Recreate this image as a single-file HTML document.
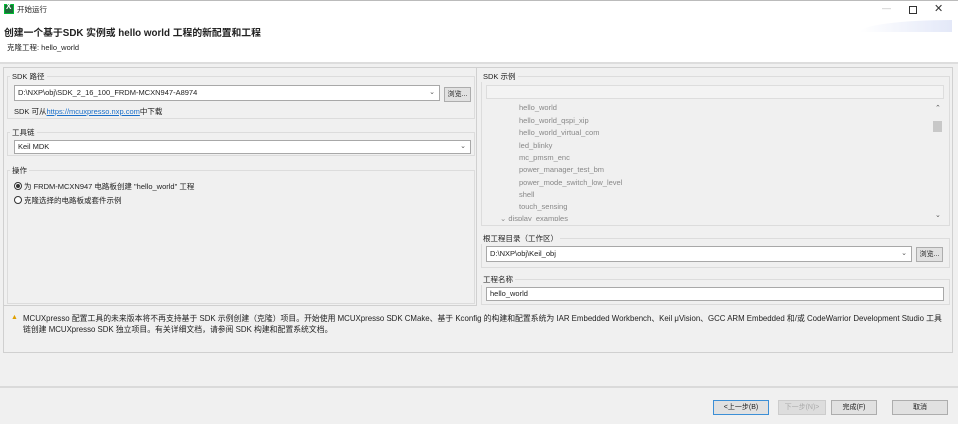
<!DOCTYPE html>
<html><head><meta charset="utf-8"><style>
*{margin:0;padding:0;box-sizing:border-box}
body{width:958px;height:424px;overflow:hidden;background:#f0f0f0;font-family:"Liberation Sans","Noto Sans CJK SC",sans-serif;font-size:8px;color:#222;position:relative}
.a{position:absolute;white-space:nowrap}
.lb{position:absolute;white-space:nowrap;background:#f0f0f0;padding:0 2px;z-index:2;font-size:7.5px}
.box{position:absolute;border:1px solid #dcdcdc}
.in{position:absolute;background:#fff;border:1px solid #a8a8a8;padding-left:3px;line-height:13px;font-size:7.5px}
.btn{position:absolute;background:#e1e1e1;border:1px solid #adadad;text-align:center;font-size:7px;line-height:13px}
.dd{position:absolute;right:4px;top:0;font-size:7px;color:#555}
.li{position:absolute;left:519px;color:#888;font-size:7.5px}
</style></head><body>
<div class="a" style="left:0;top:0;width:958px;height:62px;background:#fff;border-top:1px solid #bbb"></div>
<div class="a" style="left:4px;top:4px;width:10px;height:10px;background:#1e6b3a;border:1px solid #0b3"></div>
<div class="a" style="left:6px;top:2px;color:#fff;font-size:8px;font-weight:bold">X</div>
<div class="a" style="left:17px;top:4px;font-size:7.5px">开始运行</div>
<div class="a" style="left:882px;top:3px;font-size:9px;color:#bbb">—</div>
<div class="a" style="left:909px;top:6px;width:8px;height:8px;border:1px solid #333"></div>
<div class="a" style="left:934px;top:2px;font-size:11px;color:#333">✕</div>
<div class="a" style="left:860px;top:20px;width:92px;height:12px;background:linear-gradient(90deg,#fff,#e3e8f8);border-radius:100% 0 0 0"></div>
<div class="a" style="left:4px;top:25px;font-size:9.8px;font-weight:bold">创建一个基于SDK 实例或 hello world 工程的新配置和工程</div>
<div class="a" style="left:7px;top:42px;font-size:7.5px">克隆工程: hello_world</div>
<div class="a" style="left:0;top:62px;width:958px;height:2px;background:#ddd"></div>

<div class="box" style="left:3px;top:67px;width:950px;height:286px;border-color:#d0d0d0"></div>
<div class="box" style="left:3px;top:67px;width:474px;height:239px;border-color:#d0d0d0"></div>

<div class="lb" style="left:10px;top:71px">SDK 路径</div>
<div class="box" style="left:7px;top:76px;width:468px;height:43px"></div>
<div class="in" style="left:14px;top:85px;width:426px;height:16px">D:\NXP\obj\SDK_2_16_100_FRDM-MCXN947-A8974<span class="dd">⌄</span></div>
<div class="btn" style="left:444px;top:87px;width:27px;height:15px">浏览...</div>
<div class="a" style="left:14px;top:106px;font-size:7.5px">SDK 可从<span style="color:#1a6fc9;text-decoration:underline">https://mcuxpresso.nxp.com</span>中下载</div>

<div class="lb" style="left:10px;top:127px">工具链</div>
<div class="box" style="left:7px;top:132px;width:468px;height:24px"></div>
<div class="in" style="left:14px;top:140px;width:457px;height:14px;line-height:12px">Keil MDK<span class="dd">⌄</span></div>

<div class="lb" style="left:10px;top:165px">操作</div>
<div class="box" style="left:7px;top:170px;width:468px;height:134px"></div>
<div class="a" style="left:14px;top:182px;width:8px;height:8px;border:1px solid #333;border-radius:50%;background:#fff"></div>
<div class="a" style="left:16px;top:184px;width:4px;height:4px;border-radius:50%;background:#333"></div>
<div class="a" style="left:24px;top:181px;font-size:7.5px">为 FRDM-MCXN947 电路板创建 "hello_world" 工程</div>
<div class="a" style="left:14px;top:196px;width:8px;height:8px;border:1px solid #333;border-radius:50%;background:#fff"></div>
<div class="a" style="left:24px;top:195px;font-size:7.5px">克隆选择的电路板或套件示例</div>

<div class="lb" style="left:481px;top:71px">SDK 示例</div>
<div class="box" style="left:481px;top:76px;width:469px;height:150px"></div>
<div class="a" style="left:486px;top:85px;width:458px;height:14px;border:1px solid #ddd;background:#f3f3f3"></div>
<div class="li" style="top:103px">hello_world</div>
<div class="li" style="top:116px">hello_world_qspi_xip</div>
<div class="li" style="top:128px">hello_world_virtual_com</div>
<div class="li" style="top:141px">led_blinky</div>
<div class="li" style="top:153px">mc_pmsm_enc</div>
<div class="li" style="top:165px">power_manager_test_bm</div>
<div class="li" style="top:178px">power_mode_switch_low_level</div>
<div class="li" style="top:190px">shell</div>
<div class="li" style="top:202px">touch_sensing</div>
<div class="li" style="top:214px;left:500px;height:7px;overflow:hidden">⌄ display_examples</div>
<div class="a" style="left:935px;top:104px;font-size:7px;color:#555">⌃</div>
<div class="a" style="left:933px;top:121px;width:9px;height:11px;background:#c8c8c8"></div>
<div class="a" style="left:935px;top:211px;font-size:7px;color:#555">⌄</div>

<div class="lb" style="left:481px;top:233px">根工程目录（工作区）</div>
<div class="box" style="left:481px;top:238px;width:469px;height:30px"></div>
<div class="in" style="left:486px;top:246px;width:426px;height:16px">D:\NXP\obj\Keil_obj<span class="dd">⌄</span></div>
<div class="btn" style="left:916px;top:247px;width:27px;height:15px">浏览...</div>

<div class="lb" style="left:481px;top:274px">工程名称</div>
<div class="box" style="left:481px;top:279px;width:469px;height:26px"></div>
<div class="in" style="left:486px;top:287px;width:458px;height:14px;line-height:12px">hello_world</div>

<div class="a" style="left:11px;top:314px;color:#e0a000;font-size:7px">▲</div>
<div class="a" style="left:23px;top:313px;font-size:7.85px;line-height:11px">MCUXpresso 配置工具的未来版本将不再支持基于 SDK 示例创建（克隆）项目。开始使用 MCUXpresso SDK CMake、基于 Kconfig 的构建和配置系统为 IAR Embedded Workbench、Keil μVision、GCC ARM Embedded 和/或 CodeWarrior Development Studio 工具<br>链创建 MCUXpresso SDK 独立项目。有关详细文档，请参阅 SDK 构建和配置系统文档。</div>

<div class="a" style="left:0;top:386px;width:958px;height:2px;background:#dadada"></div>
<div class="btn" style="left:713px;top:400px;width:56px;height:15px;border:1px solid #3c8fd6">&lt;上一步(B)</div>
<div class="btn" style="left:778px;top:400px;width:48px;height:15px;color:#aaa;background:#ddd;border-color:#ccc">下一步(N)&gt;</div>
<div class="btn" style="left:831px;top:400px;width:46px;height:15px">完成(F)</div>
<div class="btn" style="left:892px;top:400px;width:56px;height:15px">取消</div>
</body></html>
